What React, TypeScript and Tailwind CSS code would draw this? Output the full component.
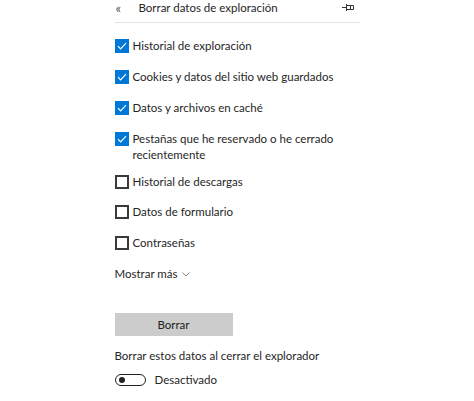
const items = [
  { label: "Historial de exploración", checked: true, mt: "mt-[15px]" },
  { label: "Cookies y datos del sitio web guardados", checked: true, mt: "mt-[15px]" },
  { label: "Datos y archivos en caché", checked: true, mt: "mt-[15px]" },
  { label: "Pestañas que he reservado o he cerrado recientemente", checked: true, mt: "mt-[15px]" },
  { label: "Historial de descargas", checked: false, mt: "mt-[11px]" },
  { label: "Datos de formulario", checked: false, mt: "mt-[14px]" },
  { label: "Contraseñas", checked: false, mt: "mt-[15px]" },
];

const CheckBox = ({ checked }: { checked: boolean }) =>
  checked ? (
    <span className="flex h-[14px] w-[14px] shrink-0 items-center justify-center bg-[#0078d7]">
      <svg width="10" height="8" viewBox="0 0 10 8" fill="none">
        <path d="M1 4.2 L3.6 6.8 L9 1.2" stroke="white" strokeWidth="1.2" />
      </svg>
    </span>
  ) : (
    <span className="block h-[14px] w-[14px] shrink-0 border-2 border-[#3a3a3a]" />
  );

export default function App() {
  return (
    <div
      className="h-[401px] w-[474px] bg-white text-[#262626] text-[11.5px] leading-4"
      style={{ fontFamily: 'Lato, "Noto Sans", sans-serif' }}
    >
      <div className="mx-auto w-[245px]">
        <div className="flex h-[23px] items-start border-b border-[#e3e3e3] pb-[6px]">
          <span className="ml-[1px] w-[23px] text-[13px] leading-4 text-[#555]">«</span>
          <span className="flex-1">Borrar datos de exploración</span>
          <svg className="mr-[5px] mt-[3px]" width="13" height="9" viewBox="0 0 13 9" fill="none" stroke="#333" strokeWidth="1">
            <path d="M0 4.5 H4" />
            <path d="M4.5 1 V8" />
            <path d="M4.5 2.5 H11.5 V6.5 H4.5" />
            <path d="M8.5 2.5 V6.5" />
          </svg>
        </div>

        {items.map((it) => (
          <div key={it.label} className={`flex items-start gap-[4px] ${it.mt}`}>
            <span className="block pt-[1px]">
              <CheckBox checked={it.checked} />
            </span>
            <span className="pr-4">{it.label}</span>
          </div>
        ))}

        <div className="mt-[15px] flex items-center gap-[5px]">
          <span>Mostrar más</span>
          <svg width="8" height="5" viewBox="0 0 8 5" fill="none" stroke="#888" strokeWidth="1">
            <path d="M0.5 0.5 L4 4 L7.5 0.5" />
          </svg>
        </div>

        <button className="mt-[31px] h-[23px] w-[118px] bg-[#cccccc] text-[#222]">Borrar</button>

        <div className="mt-[12px]">Borrar estos datos al cerrar el explorador</div>

        <div className="mt-[8px] flex items-center gap-[9px]">
          <span className="flex h-[12px] w-[31px] items-center rounded-full border-[1.5px] border-[#222] px-[3px]">
            <span className="h-[6px] w-[6px] rounded-full bg-[#222]" />
          </span>
          <span>Desactivado</span>
        </div>
      </div>
    </div>
  );
}
